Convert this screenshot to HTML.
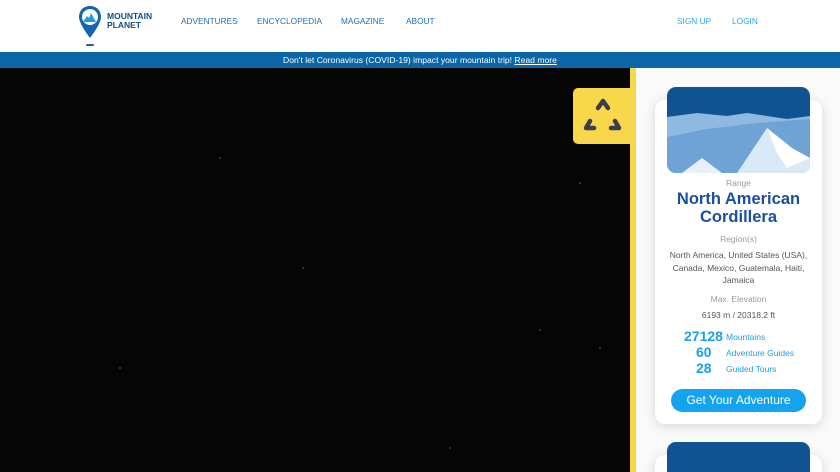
<!DOCTYPE html>
<html style="width:840px;height:472px;overflow:hidden"><head><meta charset="utf-8">
<style>
*{margin:0;padding:0;box-sizing:border-box}
body{width:840px;height:472px;overflow:hidden;font-family:"Liberation Sans",sans-serif;background:#fff;position:relative}
.hdr{position:absolute;left:0;top:0;width:840px;height:52px;background:#fff}
.nav a{position:absolute;top:16px;font-size:8.3px;color:#1f6fb2;text-decoration:none}
.nav a.r{color:#2aa8e6}
.ban{position:absolute;top:52px;left:0;width:840px;height:16px;background:#0b66a8;color:#fff;font-size:8.6px;text-align:center;line-height:16px}
.ban u{color:#fff}
.dark{position:absolute;left:0;top:68px;width:630px;height:404px;background:#050505}
.ybar{position:absolute;left:630px;top:68px;width:6px;height:404px;background:#f8d84a}
.ybox{position:absolute;left:573px;top:88px;width:58px;height:56px;background:#f8d84a;border-radius:5px 0 0 5px}
.side{position:absolute;left:636px;top:68px;width:204px;height:404px;background:#fafafa;overflow:hidden}
.card{position:absolute;left:655px;top:100px;width:167px;height:324px;background:#fff;border-radius:10px;box-shadow:0 2px 12px rgba(0,0,0,.15)}
.img{position:absolute;left:667px;top:87px;width:143px;height:86px;border-radius:9px;overflow:hidden;background:#0f5492}
.c{position:absolute;left:655px;width:167px;text-align:center}
.lbl{font-size:8.5px;color:#9a9a9a}
.st{position:absolute;font-size:14px;font-weight:bold;color:#1aa0e8}
.sl{position:absolute;font-size:8.5px;color:#1aa0e8;left:726px}
.btn{position:absolute;left:671px;top:389px;width:135px;height:23px;border-radius:12px;background:#14a4ef;color:#fff;font-size:12px;text-align:center;line-height:23px}
</style></head><body>
<div class="hdr">
<svg style="position:absolute;left:78px;top:5px" width="26" height="42" viewBox="0 0 26 42">
<path d="M12 1C5 1 1 6 1 12c0 7 11 21 11 21S23 19 23 12C23 6 19 1 12 1z" fill="#1565b0"/>
<circle cx="12" cy="12" r="8" fill="#fff"/>
<path d="M5 17l4-6 2 2 2-5 5 9z" fill="#1e9be0"/>
<rect x="8" y="39" width="8" height="2" rx="1" fill="#1565b0"/>
</svg>
<div style="position:absolute;left:107px;top:12px;font-size:8.5px;font-weight:bold;color:#0d4f8f;line-height:8.5px">MOUNTAIN<br>PLANET</div>
<div class="nav">
<a style="left:181px">ADVENTURES</a><a style="left:257px">ENCYCLOPEDIA</a><a style="left:341px">MAGAZINE</a><a style="left:406px">ABOUT</a>
<a class="r" style="left:677px">SIGN UP</a><a class="r" style="left:732px">LOGIN</a>
</div></div>
<div class="ban">Don't let Coronavirus (COVID-19) impact your mountain trip! <u>Read more</u></div>
<div class="dark"></div>
<svg style="position:absolute;left:0;top:68px" width="630" height="404"><g fill="#444">
<circle cx="540" cy="262" r="1"/><circle cx="580" cy="115" r="1"/><circle cx="303" cy="200" r="1"/><circle cx="120" cy="300" r="1"/><circle cx="450" cy="380" r="1"/><circle cx="600" cy="280" r="1"/><circle cx="220" cy="90" r="1"/></g></svg>
<div class="ybar"></div>
<div class="ybox"><svg width="58" height="56" viewBox="0 0 58 56"><g stroke="#3a3d4f" stroke-width="4.5" fill="none" stroke-linecap="round" stroke-linejoin="round"><path d="M25 20l5-7 5 7"/><path d="M17 33l-4 7h8"/><path d="M42 33l4 7h-8"/></g></svg></div>
<div class="side">
<div style="position:absolute;left:19px;top:387px;width:167px;height:60px;background:#fff;border-radius:10px;box-shadow:0 2px 12px rgba(0,0,0,.15)"></div>
<div style="position:absolute;left:31px;top:374px;width:143px;height:60px;border-radius:9px;background:#0f5492"></div>
</div>
<div class="card"></div>
<div class="img"><svg width="143" height="86" viewBox="0 0 143 86">
<path d="M0 30l30-4 30 3 20-3 40 6 23-3v57H0z" fill="#8fb9e0"/>
<path d="M0 50l40-8 50-6 53-4v54H0z" fill="#6fa3d6"/>
<path d="M70 86l30-45 15 20 28 10v15z" fill="#d9e9f5"/>
<path d="M100 41l10 25 10 15 23-10-18-10z" fill="#fff"/>
<path d="M15 86l20-15 20 15z" fill="#e8f1f9"/>
</svg></div>
<div class="c lbl" style="top:178px">Range</div>
<div class="c" style="top:190px;font-size:16.5px;font-weight:bold;color:#1b4f9c;line-height:18px">North American<br>Cordillera</div>
<div class="c lbl" style="top:234px">Region(s)</div>
<div class="c" style="top:249px;font-size:8.5px;color:#555;line-height:12.5px">North America, United States (USA),<br>Canada, Mexico, Guatemala, Haiti,<br>Jamaica</div>
<div class="c lbl" style="top:294px">Max. Elevation</div>
<div class="c" style="top:310px;font-size:8.5px;color:#555">6193 m / 20318.2 ft</div>
<div class="st" style="left:684px;top:328px">27128</div><div class="sl" style="top:332px">Mountains</div>
<div class="st" style="left:696px;top:344px">60</div><div class="sl" style="top:348px">Adventure Guides</div>
<div class="st" style="left:696px;top:360px">28</div><div class="sl" style="top:364px">Guided Tours</div>
<div class="btn">Get Your Adventure</div>
</body></html>
